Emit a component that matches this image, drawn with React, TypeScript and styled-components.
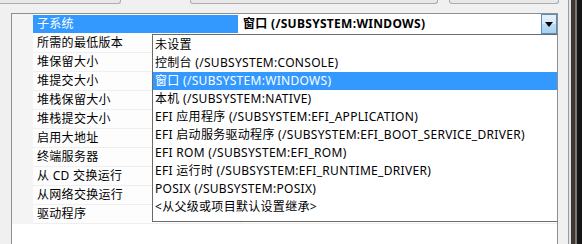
import React from "react";
import styled, { createGlobalStyle } from "styled-components";

const GlobalStyle = createGlobalStyle`
  html, body { margin: 0; padding: 0; background: #f0f0f0; }
  body {
    font-family: "Noto Sans", "Noto Sans CJK SC", sans-serif;
    font-size: 12px;
    letter-spacing: 0.3px;
    color: #000;
  }
  * { box-sizing: border-box; }
`;

const Window = styled.div`
  display: flex;
  width: 582px;
  height: 244px;
  overflow: hidden;
`;

const Main = styled.div`
  flex: 1;
  display: flex;
  flex-direction: column;
  background: #f0f0f0;
  min-width: 0;
`;

const Edge = styled.div`
  width: 14px;
  flex: none;
  background: linear-gradient(
    to right,
    #9c9c9c 0 1px,
    #e4e4e4 1px 3px,
    #3e3732 3px 7px,
    #7d7771 7px 9px,
    #161616 9px 14px
  );
`;

const TopStrip = styled.div`
  display: flex;
  align-items: flex-start;
  height: 13px;
  flex: none;
`;

const ButtonBottom = styled.div<{ $w: number; $ml: number }>`
  width: ${(p) => p.$w}px;
  margin-left: ${(p) => p.$ml}px;
  height: 4px;
  border: 1px solid #acacac;
  border-top: none;
  border-radius: 0 0 3px 3px;
  background: #e8e8e8;
  flex: none;
`;

const Grid = styled.div`
  position: relative;
  flex: 1;
  margin-left: 11px;
  margin-right: 10px;
  border: 1px solid #8e8f8f;
  border-bottom: none;
  background: #fff;
  display: flex;
  flex-direction: column;
`;

const Row = styled.div<{ $h: number }>`
  display: grid;
  grid-template-columns: 21px 207px 1fr;
  height: ${(p) => p.$h}px;
  flex: none;
`;

const Gutter = styled.div`
  background: #f4f4f4;
`;

const Label = styled.div`
  padding-left: 4px;
  line-height: 18px;
  white-space: nowrap;
  border-bottom: 1px solid #efefef;
  background: #fdfdfd;
`;

const Value = styled.div`
  border-bottom: 1px solid #efefef;
  border-left: 1px solid #efefef;
  background: #fff;
`;

const HeadLabel = styled.div`
  margin: 1px 2px 1px 0;
  padding-left: 4px;
  line-height: 18px;
  background: #3399ff;
  color: #fff;
  white-space: nowrap;
`;

const HeadValue = styled.div`
  display: flex;
  align-items: stretch;
  padding-left: 3px;
`;

const HeadText = styled.span`
  flex: 1;
  font-weight: bold;
  line-height: 19px;
  white-space: nowrap;
`;

const ArrowButton = styled.div`
  width: 16px;
  display: flex;
  align-items: center;
  justify-content: center;
  border: 1px solid #5a8db3;
  background: linear-gradient(to bottom, #e6f2fc 0%, #d4e9fa 50%, #bcdcf4 51%, #a7d0f0 100%);
`;

const Popup = styled.div`
  position: absolute;
  left: 140px;
  top: 20px;
  width: 406px;
  height: 188px;
  border: 1px solid #6b6b6b;
  border-right-color: #8e8f8f;
  background: #fff;
  padding-top: 1px;
`;

const Item = styled.div<{ $active?: boolean }>`
  height: 18px;
  line-height: 18px;
  padding-left: 2px;
  white-space: nowrap;
  background: ${(p) => (p.$active ? "#3399ff" : "transparent")};
  color: ${(p) => (p.$active ? "#fff" : "#000")};
`;

const labels = [
  "所需的最低版本",
  "堆保留大小",
  "堆提交大小",
  "堆栈保留大小",
  "堆栈提交大小",
  "启用大地址",
  "终端服务器",
  "从 CD 交换运行",
  "从网络交换运行",
  "驱动程序",
];

const options = [
  "未设置",
  "控制台 (/SUBSYSTEM:CONSOLE)",
  "窗口 (/SUBSYSTEM:WINDOWS)",
  "本机 (/SUBSYSTEM:NATIVE)",
  "EFI 应用程序 (/SUBSYSTEM:EFI_APPLICATION)",
  "EFI 启动服务驱动程序 (/SUBSYSTEM:EFI_BOOT_SERVICE_DRIVER)",
  "EFI ROM (/SUBSYSTEM:EFI_ROM)",
  "EFI 运行时 (/SUBSYSTEM:EFI_RUNTIME_DRIVER)",
  "POSIX (/SUBSYSTEM:POSIX)",
  "<从父级或项目默认设置继承>",
];

export default function App() {
  return (
    <>
      <GlobalStyle />
      <Window>
        <Main>
          <TopStrip>
            <ButtonBottom $w={126} $ml={-5} />
            <ButtonBottom $w={248} $ml={69} />
            <ButtonBottom $w={110} $ml={11} />
          </TopStrip>
          <Grid>
            <Row $h={20}>
              <Gutter />
              <HeadLabel>子系统</HeadLabel>
              <HeadValue>
                <HeadText>窗口 (/SUBSYSTEM:WINDOWS)</HeadText>
                <ArrowButton>
                  <svg width="8" height="5" viewBox="0 0 8 5">
                    <path d="M0 0 H8 L4 5 Z" fill="#000" />
                  </svg>
                </ArrowButton>
              </HeadValue>
            </Row>
            {labels.map((l) => (
              <Row $h={19} key={l}>
                <Gutter />
                <Label>{l}</Label>
                <Value />
              </Row>
            ))}
            <Popup>
              {options.map((o, i) => (
                <Item key={o} $active={i === 2}>
                  {o}
                </Item>
              ))}
            </Popup>
          </Grid>
        </Main>
        <Edge />
      </Window>
    </>
  );
}
